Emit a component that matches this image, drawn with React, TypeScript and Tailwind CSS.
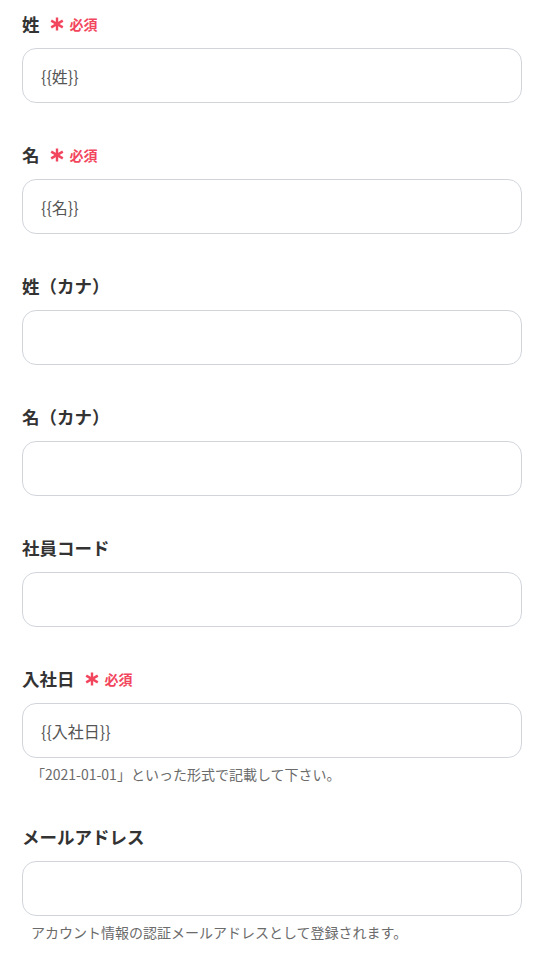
import React from "react";

type Field = { label: string; required?: boolean; value?: string; help?: string };

const fields: Field[] = [
  { label: "姓", required: true, value: "{{姓}}" },
  { label: "名", required: true, value: "{{名}}" },
  { label: "姓（カナ）" },
  { label: "名（カナ）" },
  { label: "社員コード" },
  { label: "入社日", required: true, value: "{{入社日}}", help: "「2021-01-01」といった形式で記載して下さい。" },
  { label: "メールアドレス", help: "アカウント情報の認証メールアドレスとして登録されます。" },
];

function Asterisk() {
  return (
    <svg width="14" height="14" viewBox="0 0 14 14" className="mr-[6px]">
      <g stroke="#f2465e" strokeWidth="2.4" strokeLinecap="butt">
        <line x1="7" y1="0.5" x2="7" y2="13.5" />
        <line x1="1.2" y1="3.6" x2="12.8" y2="10.4" />
        <line x1="1.2" y1="10.4" x2="12.8" y2="3.6" />
      </g>
    </svg>
  );
}

export default function App() {
  return (
    <div
      className="w-[543px] min-h-[957px] bg-white px-[22px] pt-[12px]"
      style={{ fontFamily: '"Noto Sans CJK JP", "Noto Sans", sans-serif' }}
    >
      <div className="flex flex-col gap-[40px]">
        {fields.map((f) => (
          <div key={f.label} className="flex flex-col">
            <div className="flex items-center h-[24px] mb-[12px]">
              <span className="text-[17.5px] font-bold text-[#333333] leading-[24px]">{f.label}</span>
              {f.required && (
                <span className="flex items-center ml-[10px] text-[#f2465e]">
                  <Asterisk />
                  <span className="text-[14px] font-bold leading-none">必須</span>
                </span>
              )}
            </div>
            <div className="h-[55px] w-[500px] rounded-[14px] border border-[#d1d5db] flex items-center px-[18px]">
              {f.value && <span className="text-[16px] text-[#555555]">{f.value}</span>}
            </div>
            {f.help && (
              <div className="mt-[6px] pl-[9px] text-[14px] leading-[21px] text-[#6b6b6b]">{f.help}</div>
            )}
          </div>
        ))}
      </div>
    </div>
  );
}
